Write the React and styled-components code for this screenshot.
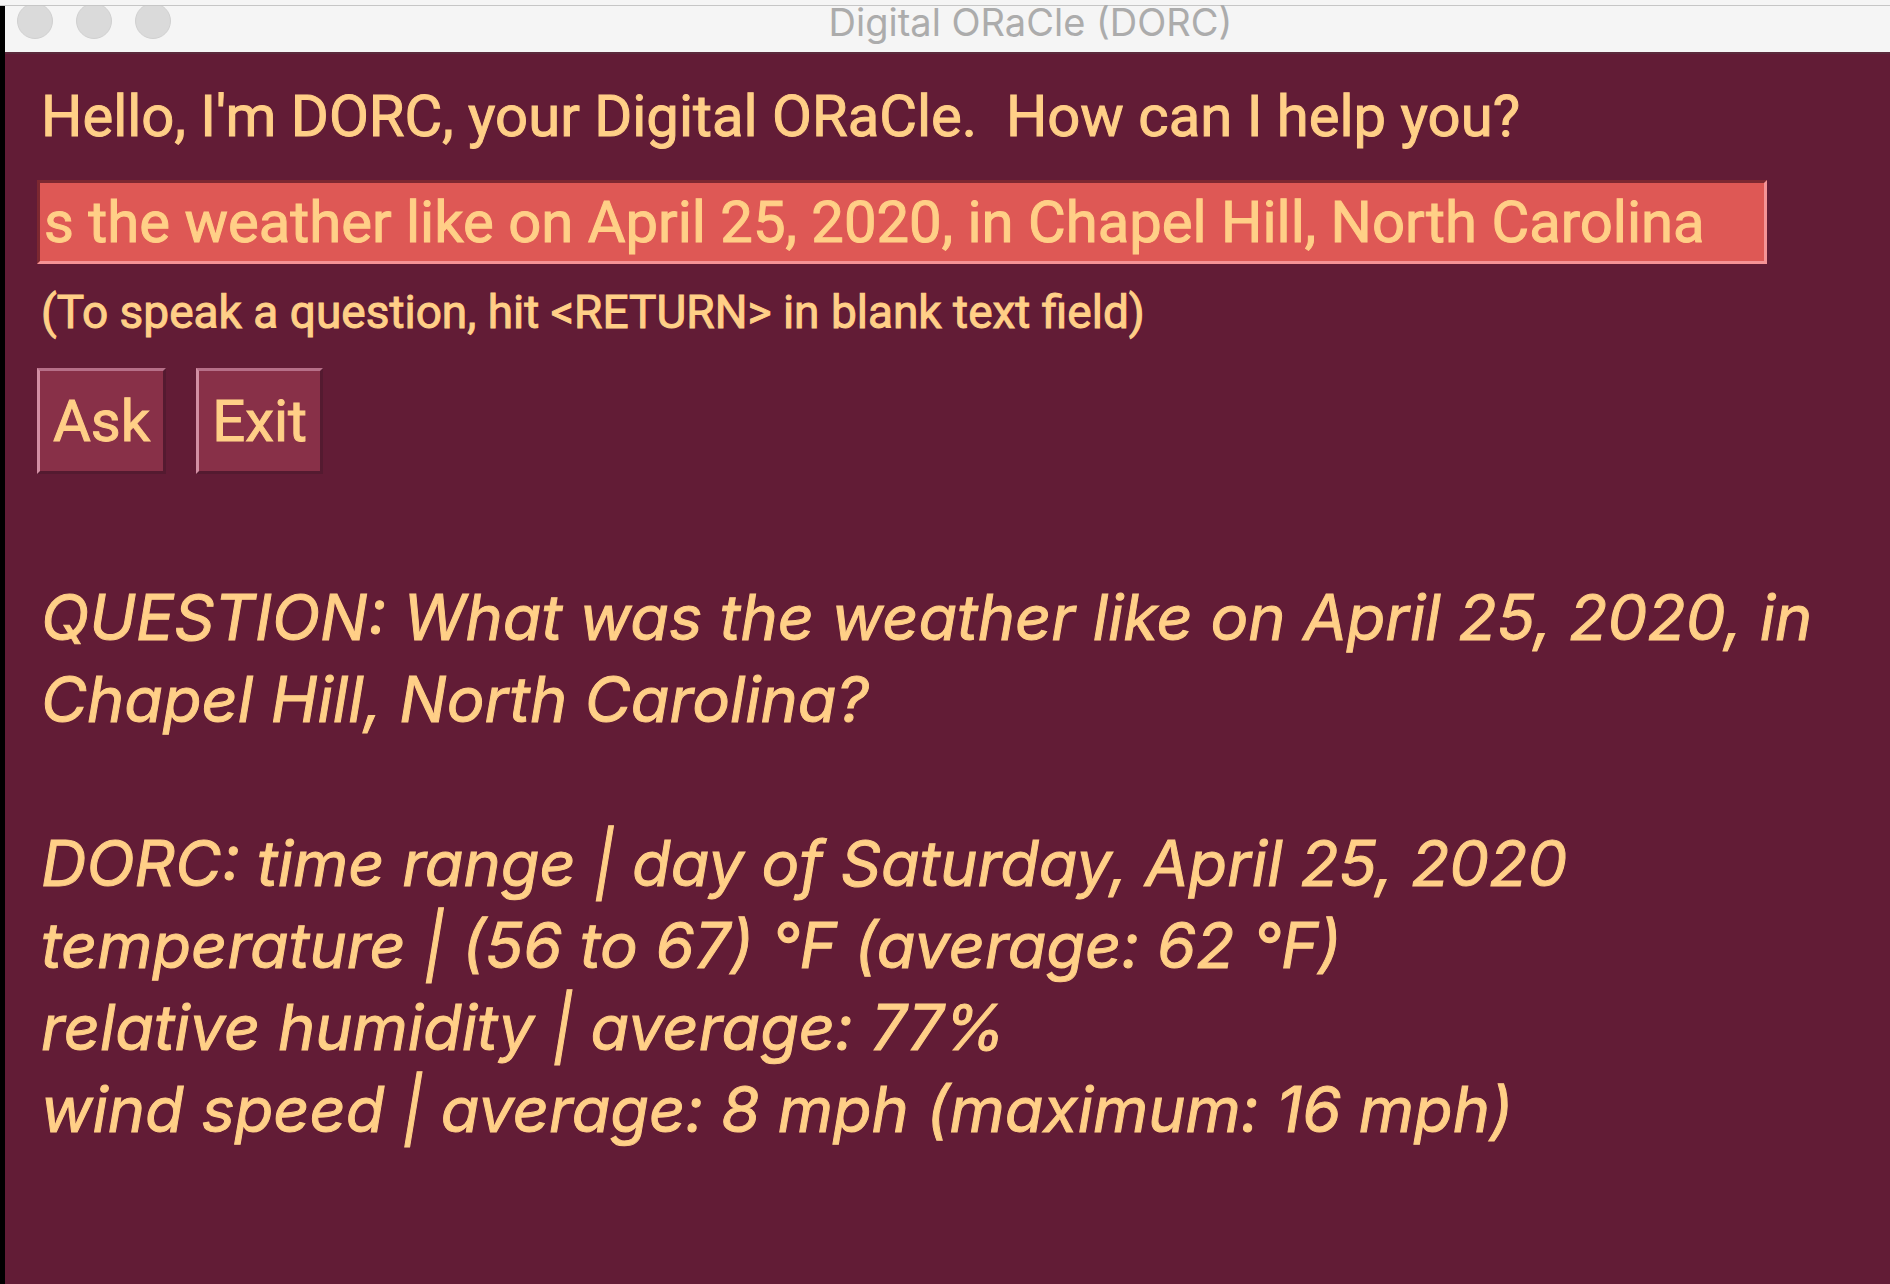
import React, { useState } from "react";
import styled, { createGlobalStyle } from "styled-components";

const Global = createGlobalStyle`
  * { box-sizing: border-box; }
  body { margin: 0; background: #621c36; font-family: Roboto, "Liberation Sans", sans-serif; }
`;
const Page = styled.div`
  display: flex;
  flex-direction: column;
  min-height: 100vh;
`;
const TopEdge = styled.div`
  height: 6px;
  background: #f5f5f5;
  border-bottom: 1px solid #c6c6c6;
`;
const Window = styled.div`
  flex: 1;
  border-left: 5px solid #000;
  color: #ffcf87;
`;
const TitleBar = styled.header`
  display: grid;
  grid-template-columns: auto 1fr;
  height: 48px;
  padding-left: 12px;
  background: #f5f5f5;
  border-bottom: 2px solid #5b2a3c;
`;
const Lights = styled.div`
  display: flex;
  gap: 23px;
  overflow: hidden;
`;
const Light = styled.span`
  width: 36px;
  height: 36px;
  margin-top: -3px;
  border-radius: 50%;
  background: #dadada;
  border: 1px solid #d0d0d0;
`;
const Title = styled.h1`
  margin: 0;
  font-family: Inter, "Liberation Sans", sans-serif;
  font-size: 38px;
  line-height: 32px;
  font-weight: 400;
  text-align: center;
  color: #acacac;
`;
const Main = styled.main`
  padding: 28px 32px;
  -webkit-text-stroke: 1px #ffcf87;
`;
const Form = styled.form`
  display: flex;
  flex-direction: column;
  align-items: flex-start;
`;
const Greeting = styled.label`
  padding-left: 4px;
  font-size: 58px;
  line-height: 68px;
  white-space: pre-wrap;
`;
const Question = styled.input`
  width: 95%;
  height: 84px;
  margin-top: 30px;
  padding: 0 4px;
  font: inherit;
  font-size: 58px;
  color: inherit;
  background: #de5855;
  border: 3px solid;
  border-color: #7c2831 #f59396 #f59396 #7c2831;
  outline: none;
`;
const Hint = styled.p`
  margin: 20px 0 28px;
  padding-left: 4px;
  font-size: 46px;
  line-height: 56px;
`;
const Buttons = styled.div`
  display: flex;
  gap: 30px;
`;
const Button = styled.button`
  height: 106px;
  padding: 0 13px;
  font: inherit;
  font-size: 58px;
  color: inherit;
  background: #883048;
  border: 3px solid;
  border-color: #b66f88 #541a30 #541a30 #d28fa4;
`;
const Answer = styled.section`
  margin-top: 102px;
  padding-left: 4px;
  font-family: Inter, "Liberation Sans", sans-serif;
  font-size: 63px;
  line-height: 82px;
  font-style: italic;
  white-space: pre-wrap;
`;
const Para = styled.p`
  margin: 0 0 82px;
`;

export default function App() {
  const [value, setValue] = useState("s the weather like on April 25, 2020, in Chapel Hill, North Carolina");
  return (
    <Page>
      <Global />
      <TopEdge />
      <Window>
        <TitleBar>
          <Lights><Light /><Light /><Light /></Lights>
          <Title>Digital ORaCle (DORC)</Title>
        </TitleBar>
        <Main>
          <Form onSubmit={(e) => e.preventDefault()}>
            <Greeting htmlFor="question">{"Hello, I'm DORC, your Digital ORaCle.  How can I help you?"}</Greeting>
            <Question id="question" value={value} onChange={(e) => setValue(e.target.value)} />
            <Hint>{"(To speak a question, hit <RETURN> in blank text field)"}</Hint>
            <Buttons>
              <Button type="submit">Ask</Button>
              <Button type="button">Exit</Button>
            </Buttons>
          </Form>
          <Answer>
            <Para>QUESTION: What was the weather like on April 25, 2020, in Chapel Hill, North Carolina?</Para>
            <Para>{"DORC: time range | day of Saturday, April 25, 2020\ntemperature | (56 to 67) °F (average: 62 °F)\nrelative humidity | average: 77%\nwind speed | average: 8 mph (maximum: 16 mph)"}</Para>
          </Answer>
        </Main>
      </Window>
    </Page>
  );
}
